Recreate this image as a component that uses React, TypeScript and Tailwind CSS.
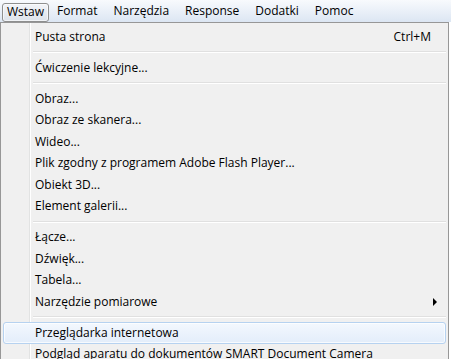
import React from "react";

type Item = { label: string; shortcut?: string; sub?: boolean; hover?: boolean } | "sep";

const items: Item[] = [
  { label: "Pusta strona", shortcut: "Ctrl+M" },
  "sep",
  { label: "Ćwiczenie lekcyjne..." },
  "sep",
  { label: "Obraz..." },
  { label: "Obraz ze skanera..." },
  { label: "Wideo..." },
  { label: "Plik zgodny z programem Adobe Flash Player..." },
  { label: "Obiekt 3D..." },
  { label: "Element galerii..." },
  "sep",
  { label: "Łącze..." },
  { label: "Dźwięk..." },
  { label: "Tabela..." },
  { label: "Narzędzie pomiarowe", sub: true },
  "sep",
  { label: "Przeglądarka internetowa", hover: true },
  { label: "Podgląd aparatu do dokumentów SMART Document Camera" },
];

const menus = ["Format", "Narzędzia", "Response", "Dodatki", "Pomoc"];

export default function App() {
  return (
    <div
      className="w-[451px] h-[359px] overflow-hidden bg-white text-black text-[12px] leading-none"
      style={{ fontFamily: '"Open Sans", "Noto Sans", sans-serif' }}
    >
      {/* menu bar */}
      <div className="h-[22px] flex items-center bg-[linear-gradient(#f8fafd,#dce6f3)] pl-[2px]">
        <div className="h-[19px] mt-[2px] flex items-center px-[4px] border border-[#8e8f8f] rounded-[3px] bg-[linear-gradient(#f2f4f8,#dde3eb)] shadow-[inset_0_0_0_1px_rgba(255,255,255,0.6)]">
          Wstaw
        </div>
        <div className="flex items-center ml-[8px] gap-[16px]">
          {menus.map((m) => (
            <span key={m}>{m}</span>
          ))}
        </div>
      </div>
      {/* dropdown */}
      <div className="w-[449px] border-l border-t border-r border-[#979797] pt-[3px] px-[2px] bg-[linear-gradient(to_right,#f0f0f0_28px,#e2e3e3_28px,#e2e3e3_29px,#ffffff_29px,#ffffff_30px,#f0f0f0_30px)] h-[337px]">
        {items.map((it, i) =>
          it === "sep" ? (
            <div key={i} className="h-[9.5px] flex flex-col justify-center pl-[30px]">
              <div className="h-px bg-[#e0e0e0]" />
              <div className="h-px bg-white" />
            </div>
          ) : (
            <div
              key={i}
              className={
                "h-[21.5px] flex items-center pl-[31px] pr-[14px] border rounded-[3px] " +
                (it.hover
                  ? "border-[#b6d2f0] bg-[linear-gradient(#f3f8fe,#e3edfa)] shadow-[inset_0_0_0_1px_rgba(255,255,255,0.7)]"
                  : "border-transparent")
              }
            >
              <span className="flex-1">{it.label}</span>
              {it.shortcut && <span>{it.shortcut}</span>}
              {it.sub && (
                <svg width="5" height="8" viewBox="0 0 5 8" className="mr-[-7px]">
                  <path d="M0 0 L4 4 L0 8 Z" fill="#000" />
                </svg>
              )}
            </div>
          )
        )}
      </div>
    </div>
  );
}
